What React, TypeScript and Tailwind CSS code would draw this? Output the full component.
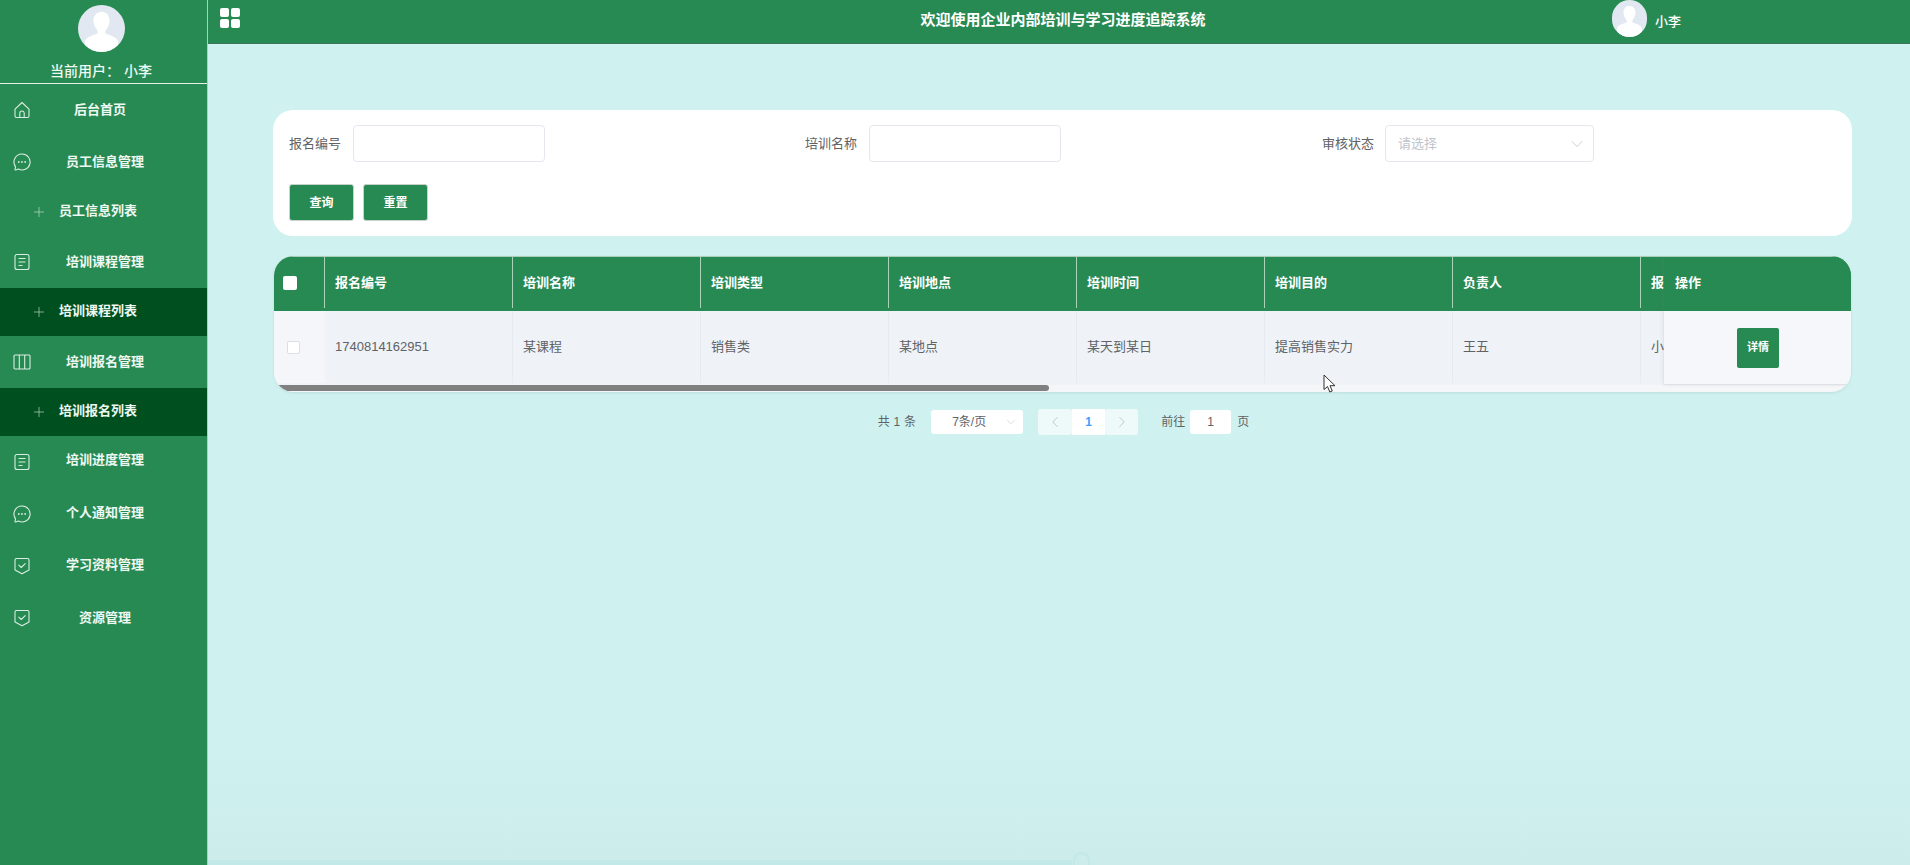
import { Plus, ChevronDown, ChevronLeft, ChevronRight } from "lucide-react";
import type { ReactNode } from "react";

const font = '[font-family:"Liberation_Sans","Noto_Sans_CJK_SC",sans-serif]';

function HomeIcon() {
  return (
    <svg viewBox="0 0 18 18" className="h-[18px] w-[18px]" fill="none" stroke="currentColor" strokeWidth="1.1" strokeLinejoin="round">
      <path d="M9 1.500 2 8.200V15a1.500 1.500 0 0 0 1.500 1.500h11A1.500 1.500 0 0 0 16 15V8.200L9 1.500Z" />
      <path d="M6.800 16.500v-4.300a2.200 2.200 0 0 1 4.400 0v4.300" />
    </svg>
  );
}

function ChatIcon() {
  return (
    <svg viewBox="0 0 18 18" className="h-[18px] w-[18px]" fill="none" stroke="currentColor" strokeWidth="1.1" strokeLinejoin="round">
      <path d="M9 1a8 8 0 1 1-3.600 15.100L2.800 17c-.6.200-1-.3-.8-.8l.6-2.400A8 8 0 0 1 9 1Z" />
      <circle cx="5.800" cy="9" r=".9" fill="currentColor" stroke="none" />
      <circle cx="9" cy="9" r=".9" fill="currentColor" stroke="none" />
      <circle cx="12.200" cy="9" r=".9" fill="currentColor" stroke="none" />
    </svg>
  );
}

function DocIcon() {
  return (
    <svg viewBox="0 0 18 18" className="h-[18px] w-[18px]" fill="none" stroke="currentColor" strokeWidth="1.1">
      <rect x="2" y="1.500" width="14" height="15" rx="2" />
      <path d="M5.500 5.500h7M5.500 9h7M5.500 12.500h4" />
    </svg>
  );
}

function ColumnsIcon() {
  return (
    <svg viewBox="0 0 18 18" className="h-[18px] w-[18px]" fill="none" stroke="currentColor" strokeWidth="1.1">
      <rect x="1" y="2" width="16" height="14" rx="1" />
      <path d="M6.300 2v14M11.700 2v14" />
    </svg>
  );
}

function ShieldIcon() {
  return (
    <svg viewBox="0 0 18 18" className="h-[18px] w-[18px]" fill="none" stroke="currentColor" strokeWidth="1.1" strokeLinejoin="round">
      <path d="M2 3a1.500 1.500 0 0 1 1.500-1.500h11A1.500 1.500 0 0 1 16 3v10l-7 3.800L2 13V3Z" />
      <path d="m5.800 8.200 2.400 2.300 4-3.800" strokeLinecap="round" />
    </svg>
  );
}

function Avatar({ className }: { className: string }) {
  return (
    <div className={`overflow-hidden rounded-full bg-[#e2e8f2] ${className}`}>
      <svg viewBox="0 0 48 48" className="h-full w-full" fill="#fff">
        <path d="M24 7c5.200 0 8.200 4 8.200 9.200 0 4-1.800 7.600-4.200 9.800v3.400c4.500 1.400 13 3.600 13 8.600v11H7V38c0-5 8.500-7.200 13-8.600V26c-2.400-2.200-4.200-5.800-4.200-9.800C15.800 11 18.800 7 24 7Z" />
      </svg>
    </div>
  );
}

type MenuItem = {
  label: string;
  icon?: ReactNode;
  sub?: boolean;
  active?: boolean;
  textClass?: string;
};

const menu: MenuItem[] = [
  { label: "后台首页", icon: <HomeIcon />, textClass: "pr-[10px]" },
  { label: "员工信息管理", icon: <ChatIcon /> },
  { label: "员工信息列表", sub: true },
  { label: "培训课程管理", icon: <DocIcon /> },
  { label: "培训课程列表", sub: true, active: true },
  { label: "培训报名管理", icon: <ColumnsIcon /> },
  { label: "培训报名列表", sub: true, active: true },
  { label: "培训进度管理", icon: <DocIcon />, textClass: "-translate-y-[2px]" },
  { label: "个人通知管理", icon: <ChatIcon />, textClass: "-translate-y-[1px]" },
  { label: "学习资料管理", icon: <ShieldIcon />, textClass: "-translate-y-[1px]" },
  { label: "资源管理", icon: <ShieldIcon /> },
];

function Sidebar() {
  return (
    <aside className="h-full w-[208px] shrink-0 border-r border-[#a9d0bb] bg-[#288a53] text-white">
      <div className="flex h-[84px] flex-col items-center border-b border-[#e4f1ea] pt-[5px] pr-[5px]">
        <Avatar className="h-[47px] w-[47px]" />
        <div className="mt-[9px] text-[14px] leading-5 font-medium text-[#eef8f2]">当前用户： 小李</div>
      </div>
      {menu.map((m) =>
        m.sub ? (
          <div
            key={m.label}
            className={`flex h-[48px] items-center pl-[31px] ${m.active ? "bg-[#00501f]" : ""}`}
          >
            <Plus size={16} strokeWidth={0.9} className="text-[#cfe6d9]" />
            <span className="ml-[12px] -translate-y-[1px] text-[13px] font-bold text-[#eef8f2]">{m.label}</span>
          </div>
        ) : (
          <div key={m.label} className="flex h-[52px] items-center pl-[13px]">
            <span className="text-[#d8eee2]">{m.icon}</span>
            <span className={`w-[148px] text-center text-[13px] font-bold text-[#eef8f2] ${m.textClass ?? ""}`}>
              {m.label}
            </span>
          </div>
        ),
      )}
    </aside>
  );
}

function Topbar() {
  return (
    <header className="flex h-[44px] shrink-0 items-center border-b border-[#3f7458] bg-[#288a53] text-white">
      <div className="mb-[8px] ml-[12px] grid h-[20px] w-[20px] shrink-0 grid-cols-2 gap-[2px]">
        <i className="rounded-[2px] bg-white" />
        <i className="rounded-[2px] bg-white" />
        <i className="rounded-[2px] bg-white" />
        <i className="rounded-[2px] bg-white" />
      </div>
      <div className="mb-[2px] ml-[651px] w-[344px] text-center text-[15px] font-bold">欢迎使用企业内部培训与学习进度追踪系统</div>
      <div className="ml-[377px] flex items-center gap-[8px]">
        <Avatar className="-mt-[7px] h-[37px] w-[35px]" />
        <span className="mt-[1px] text-[13px] font-medium">小李</span>
      </div>
    </header>
  );
}

const inputBox = "h-[37px] rounded-[4px] border border-[#e4e7ed] bg-white";

function SearchCard() {
  return (
    <section className="h-[126px] rounded-[20px] bg-white px-4 pt-[15px]">
      <div className="grid grid-cols-[516px_517px_1fr]">
        {["报名编号", "培训名称"].map((label) => (
          <div key={label} className="flex items-center gap-3">
            <label className="text-[13px] text-[#606266]">{label}</label>
            <div className={`w-[192px] ${inputBox}`} />
          </div>
        ))}
        <div className="flex items-center gap-[11px]">
          <label className="text-[13px] text-[#606266]">审核状态</label>
          <div className={`flex w-[209px] items-center justify-between pr-[6px] pl-[12px] ${inputBox}`}>
            <span className="text-[13px] text-[#c0c4cc]">请选择</span>
            <ChevronDown size={20} strokeWidth={1} className="text-[#c0c4cc]" />
          </div>
        </div>
      </div>
      <div className="mt-[22px] flex gap-[9px]">
        <button className="h-[37px] w-[65px] rounded-[3px] border border-[#c8d2cc] bg-[#288a53] text-[12px] font-bold text-white">查询</button>
        <button className="h-[37px] w-[65px] rounded-[3px] border border-[#c8d2cc] bg-[#288a53] text-[12px] font-bold text-white">重置</button>
      </div>
    </section>
  );
}

const columns = [
  { head: "报名编号", value: "1740814162951" },
  { head: "培训名称", value: "某课程" },
  { head: "培训类型", value: "销售类" },
  { head: "培训地点", value: "某地点" },
  { head: "培训时间", value: "某天到某日" },
  { head: "培训目的", value: "提高销售实力" },
  { head: "负责人", value: "王五" },
  { head: "报名人", value: "小李" },
];

function DataTable() {
  return (
    <section className="relative mx-[1px] mt-[20px] h-[136px] overflow-hidden rounded-[20px] bg-[#f5f6f7] shadow-[0_1px_3px_rgba(120,140,140,0.2)]">
      <div className="flex h-[55px] border-t border-[#a9cfba] bg-[#288a53] pb-[3px] text-[13px] font-bold text-white">
        <div className="flex w-[51px] shrink-0 items-center border-r border-[#a9d4bc] pl-[9px]">
          <span className="h-[14px] w-[14px] rounded-[2px] bg-white" />
        </div>
        {columns.map((c) => (
          <div key={c.head} className="flex w-[188px] shrink-0 items-center overflow-hidden border-r border-[#a9d4bc] pl-[10px] whitespace-nowrap">
            {c.head}
          </div>
        ))}
      </div>
      <div className="flex h-[74px] bg-[#eff3f8] pb-[2px] text-[13px] text-[#606266]">
        <div className="flex w-[51px] shrink-0 items-center bg-[#f5f6f9] pl-[13px]">
          <span className="h-[13px] w-[13px] rounded-[2px] border border-[#dcdfe6] bg-white" />
        </div>
        {columns.map((c) => (
          <div key={c.head} className="flex w-[188px] shrink-0 items-center overflow-hidden border-r border-[#e6ebf1] pl-[10px] whitespace-nowrap">
            {c.value}
          </div>
        ))}
      </div>
      <div className="h-[6px] w-[775px] rounded-full bg-[#808080]" />
      <div className="absolute top-0 right-0 w-[187px] shadow-[-1px_0_4px_rgba(120,130,140,0.12)]">
        <div className="flex h-[55px] items-center border-t border-[#a9cfba] bg-[#288a53] pb-[3px] pl-[11px] text-[13px] font-bold text-white">操作</div>
        <div className="flex h-[73px] items-center bg-[#f5f7fa] pl-[73px] shadow-[0_1px_2px_rgba(120,130,140,0.15)]">
          <button className="h-[40px] w-[42px] rounded-[2px] bg-[#288a53] text-[11px] font-bold text-white">详情</button>
        </div>
      </div>
    </section>
  );
}

function Pagination() {
  return (
    <nav className="mt-[17px] flex h-[26px] items-center justify-center pl-[2px] text-[12px] text-[#606266]">
      <span className="tracking-[0.2px]">共 1 条</span>
      <div className="ml-[15px] flex h-[24px] w-[92px] items-center rounded-[3px] bg-white pr-[5px] pl-[21px]">
        <span className="flex-1">7条/页</span>
        <ChevronDown size={14} strokeWidth={1} className="text-[#c0c4cc]" />
      </div>
      <div className="ml-[15px] flex h-[26px] w-[34px] items-center justify-center rounded-[3px] bg-[#eef9f9] text-[#c0c4cc]">
        <ChevronLeft size={18} strokeWidth={1.3} />
      </div>
      <div className="flex h-[26px] w-[33px] items-center justify-center bg-white font-bold text-[#409eff]">1</div>
      <div className="flex h-[26px] w-[33px] items-center justify-center rounded-[3px] bg-[#eef9f9] text-[#c0c4cc]">
        <ChevronRight size={18} strokeWidth={1.3} />
      </div>
      <span className="ml-[23px]">前往</span>
      <div className="ml-[5px] flex h-[24px] w-[41px] items-center justify-center rounded-[3px] bg-white">1</div>
      <span className="ml-[6px]">页</span>
    </nav>
  );
}

export default function App() {
  return (
    <div className={`relative flex h-[865px] w-[1910px] overflow-hidden bg-gradient-to-b from-[#cff2f0] from-85% to-[#cbecea] ${font}`}>
      <Sidebar />
      <main className="flex min-w-0 flex-1 flex-col">
        <Topbar />
        <div className="pt-[66px] pr-[58px] pl-[65px]">
          <SearchCard />
          <DataTable />
          <Pagination />
        </div>
      </main>
      {/* faint strip and handle along the bottom edge */}
      <div className="absolute bottom-0 left-[208px] h-[5px] w-[864px] bg-[#c3e8e8]" />
      <div className="absolute top-[852px] left-[1073px] h-[24px] w-[17px] rounded-full border-2 border-[#c3e8e8]" />
      {/* mouse cursor caught in the screenshot */}
      <svg viewBox="0 0 14 20" className="absolute top-[374px] left-[1323px] h-[20px] w-[14px]" fill="#fff" stroke="#333" strokeWidth="1" strokeLinejoin="round">
        <path d="M1 1v14.500l3.500-3 2.300 5.500 2.500-1-2.300-5.300H12L1 1Z" />
      </svg>
    </div>
  );
}
